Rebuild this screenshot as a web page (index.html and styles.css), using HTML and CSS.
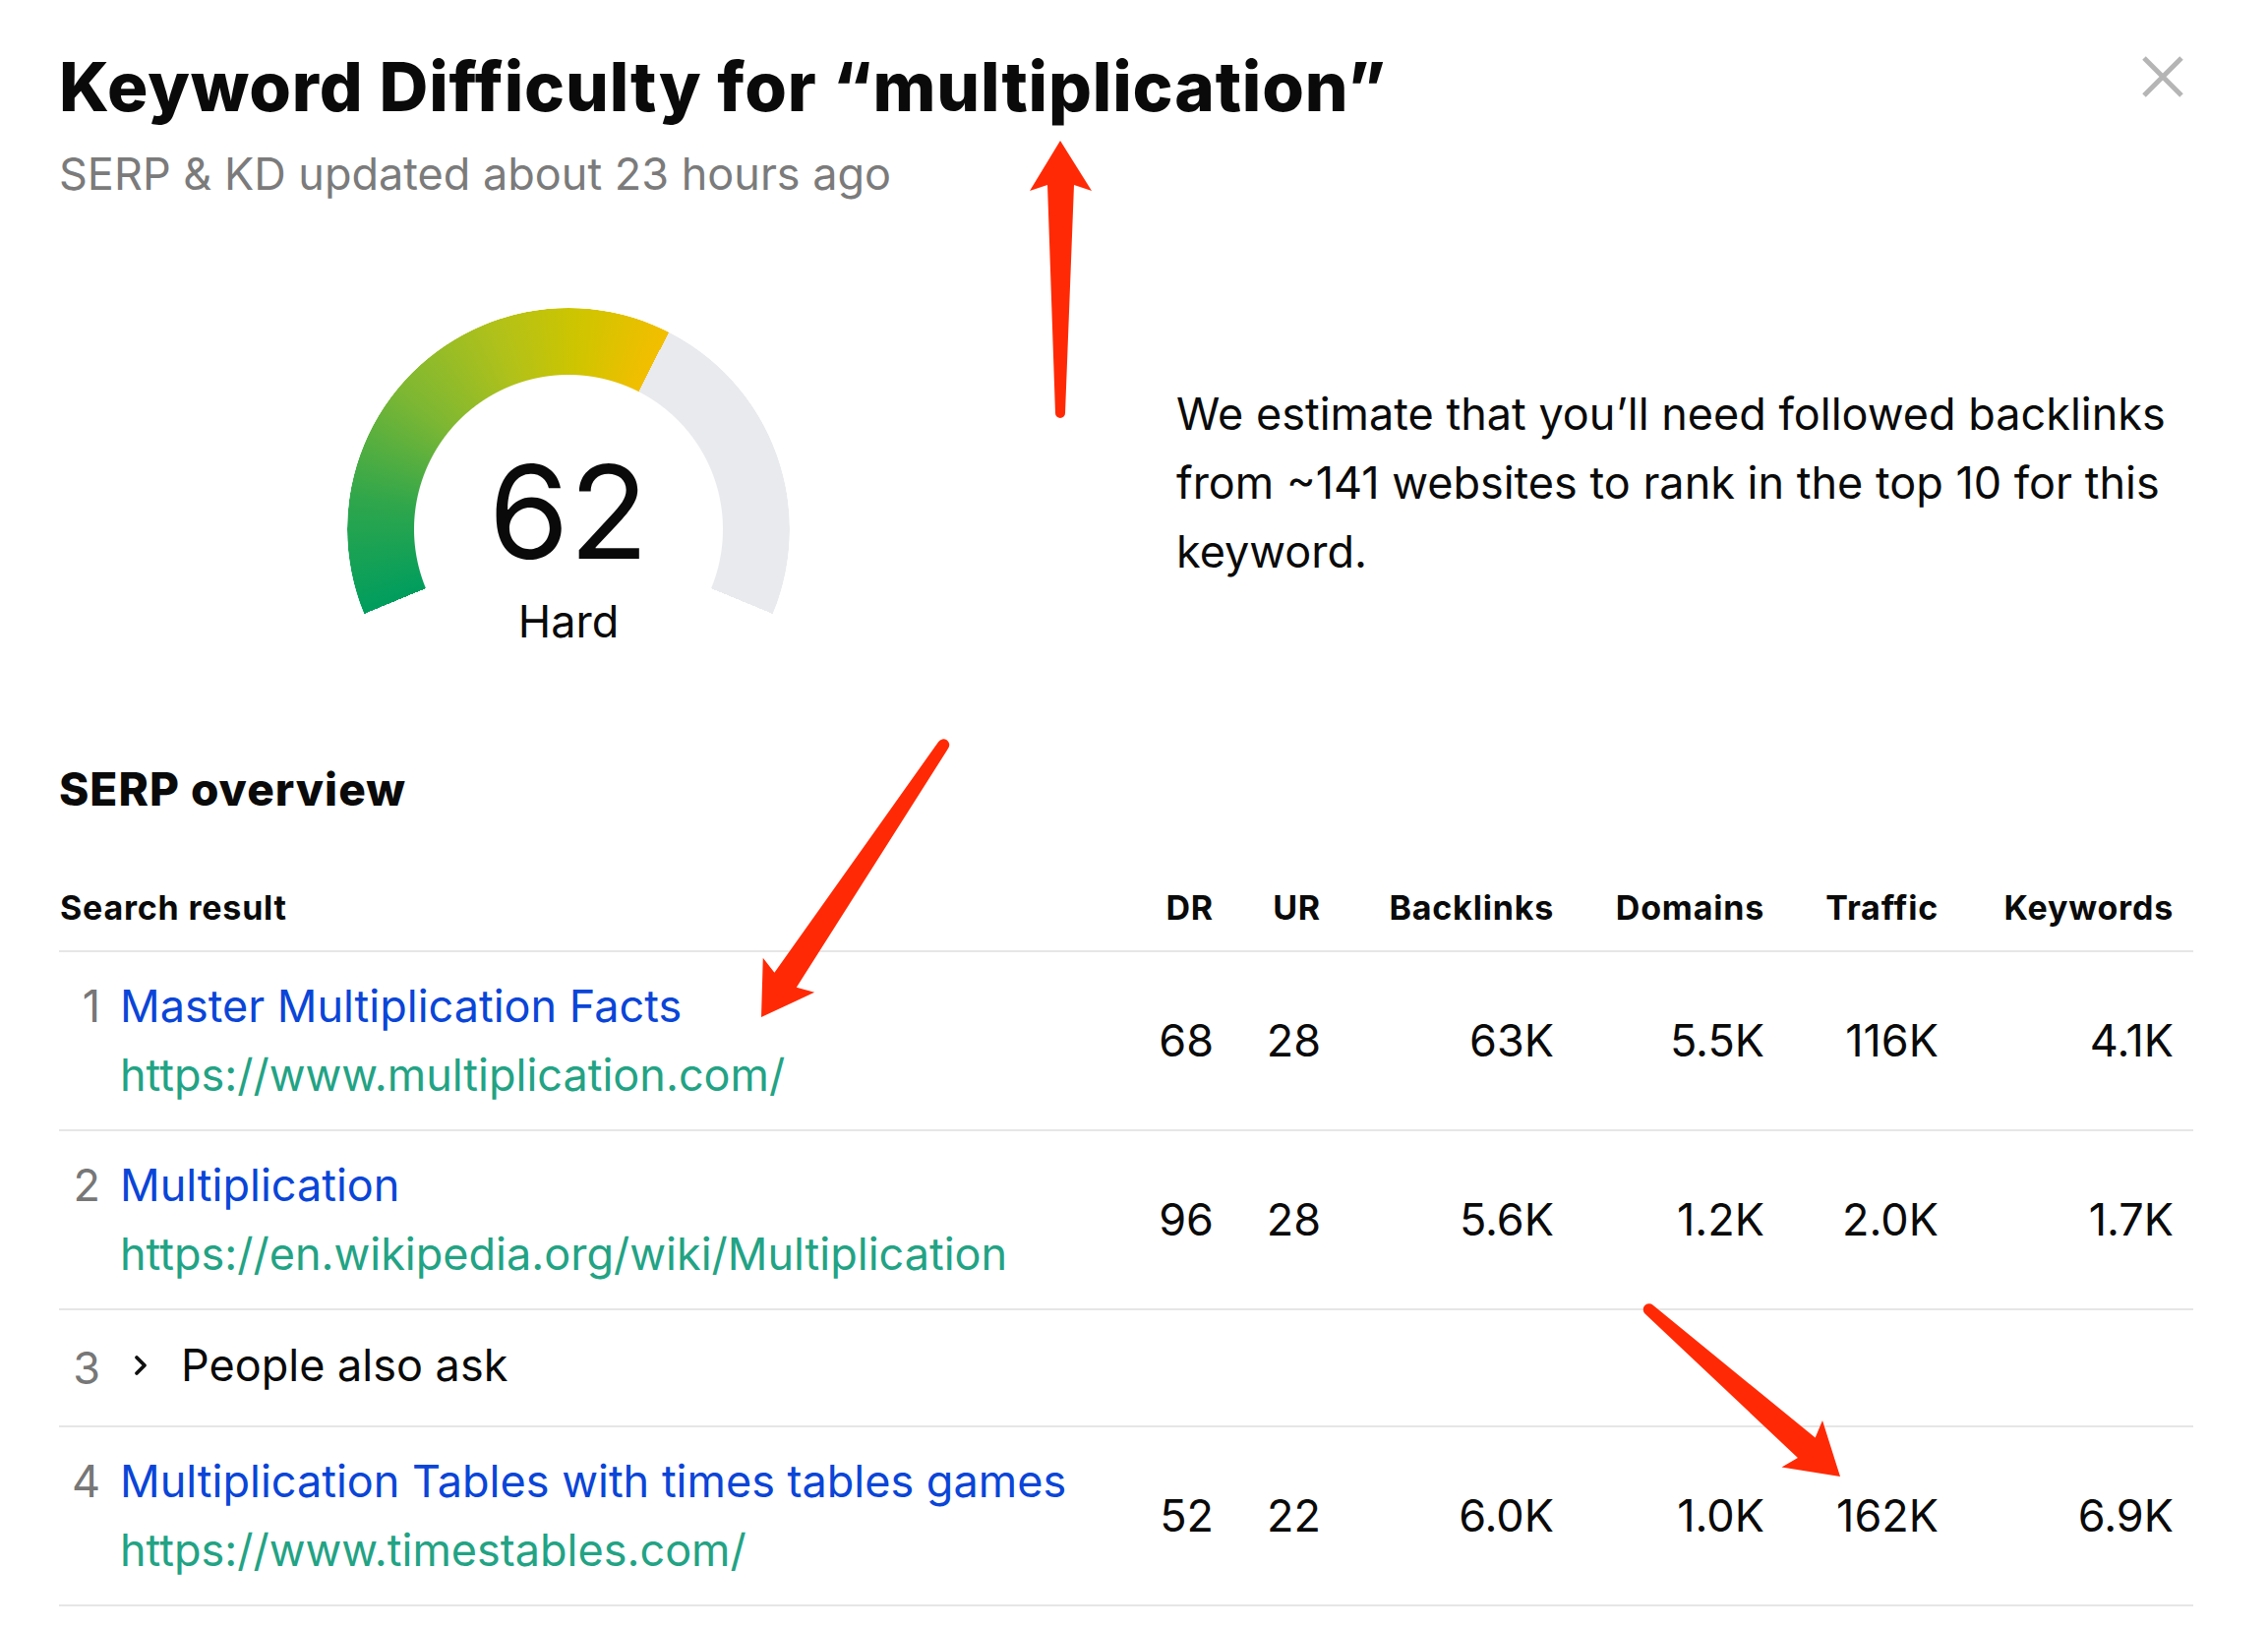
FILE: index.html
```html
<!DOCTYPE html>
<html lang="en">
<head>
<meta charset="utf-8">
<title>Keyword Difficulty for “multiplication”</title>
<link rel="stylesheet" href="styles.css">
</head>
<body>
<div class="page">
  <header class="head">
    <div class="head-text">
      <h1 class="title">Keyword Difficulty for “multiplication”</h1>
      <p class="updated">SERP &amp; KD updated about 23 hours ago</p>
    </div>
    <button class="close" aria-label="Close">
      <svg width="44" height="42" viewBox="0 0 44 42"><path d="M3 2 L41 40 M41 2 L3 40" stroke="#b5b5b5" stroke-width="5" fill="none"/></svg>
    </button>
  </header>

  <section class="kd">
    <div class="gauge-col">
      <div class="gauge">
        <span class="gauge-value">62</span>
        <span class="gauge-label">Hard</span>
      </div>
    </div>
    <p class="estimate">We estimate that you’ll need followed backlinks from ~141 websites to rank in the top 10 for this keyword.</p>
  </section>

  <h2 class="serp-title">SERP overview</h2>

  <div class="table">
    <div class="row head-row">
      <div class="cell-main">Search result</div>
      <div class="num">DR</div>
      <div class="num">UR</div>
      <div class="num">Backlinks</div>
      <div class="num">Domains</div>
      <div class="num">Traffic</div>
      <div class="num">Keywords</div>
    </div>

    <div class="row result">
      <div class="cell-main">
        <span class="rank">1</span>
        <div class="res-text">
          <a class="res-title">Master Multiplication Facts</a>
          <a class="res-url">https://www.multiplication.com/</a>
        </div>
      </div>
      <div class="num">68</div>
      <div class="num">28</div>
      <div class="num">63K</div>
      <div class="num">5.5K</div>
      <div class="num">116K</div>
      <div class="num">4.1K</div>
    </div>

    <div class="row result">
      <div class="cell-main">
        <span class="rank">2</span>
        <div class="res-text">
          <a class="res-title">Multiplication</a>
          <a class="res-url">https://en.wikipedia.org/wiki/Multiplication</a>
        </div>
      </div>
      <div class="num">96</div>
      <div class="num">28</div>
      <div class="num">5.6K</div>
      <div class="num">1.2K</div>
      <div class="num">2.0K</div>
      <div class="num">1.7K</div>
    </div>

    <div class="row result paa">
      <div class="cell-main">
        <span class="rank rank-paa">3</span>
        <svg class="chev" width="16" height="22" viewBox="0 0 16 22"><path d="M4 3 L12 11 L4 19" stroke="#111" stroke-width="3.8" fill="none" stroke-linecap="round" stroke-linejoin="round"/></svg>
        <span class="paa-text">People also ask</span>
      </div>
    </div>

    <div class="row result">
      <div class="cell-main">
        <span class="rank">4</span>
        <div class="res-text">
          <a class="res-title">Multiplication Tables with times tables games</a>
          <a class="res-url">https://www.timestables.com/</a>
        </div>
      </div>
      <div class="num">52</div>
      <div class="num">22</div>
      <div class="num">6.0K</div>
      <div class="num">1.0K</div>
      <div class="num">162K</div>
      <div class="num">6.9K</div>
    </div>
  </div>

  <svg class="arrows" width="2306" height="1656" viewBox="0 0 2306 1656" aria-hidden="true">
    <g fill="#ff2a05">
      <path transform="translate(1078 143)" d="M0 0 L32 51 L14 45 L5 277 A5 5 0 0 1 -5 277 L-13 45 L-31 51 Z"/>
      <path transform="translate(774 1034) rotate(213.8)" d="M0 0 L32 51 L14 45 L6 333 A6 6 0 0 1 -6 333 L-13 45 L-31 51 Z"/>
      <path transform="translate(1871 1501) rotate(131.15)" d="M0 0 L32 51 L14 45 L6 258 A6 6 0 0 1 -6 258 L-13 45 L-31 51 Z"/>
    </g>
  </svg>
</div>
</body>
</html>
```

FILE: styles.css
```css
* { box-sizing: border-box; }
html, body { margin: 0; padding: 0; background: #fff; }
body {
  font-family: Inter, "Noto Sans", sans-serif;
  color: #111;
  width: 2306px;
  height: 1656px;
  overflow: hidden;
}
.page {
  position: relative;
  height: 1656px;
  padding: 0 76px 0 60px;
}

/* Header */
.head {
  display: flex;
  justify-content: space-between;
  align-items: flex-start;
}
.title {
  margin: 0;
  padding-top: 48px;
  font-size: 69px;
  line-height: 80px;
  font-weight: 800;
  letter-spacing: 0.85px;
  color: #0a0a0a;
}
.updated {
  margin: 21px 0 0;
  font-size: 45px;
  line-height: 56px;
  color: #7b7b7b;
}
.close {
  margin: 57px 9px 0 0;
  padding: 0;
  border: 0;
  background: none;
  width: 44px;
  height: 42px;
  display: block;
}
.close svg { display: block; }

/* KD section */
.kd {
  display: grid;
  grid-template-columns: 1036px 1fr;
  column-gap: 100px;
  margin-top: 108px;
}
.gauge-col {
  display: flex;
  justify-content: center;
}
.gauge {
  position: relative;
  width: 450px;
  height: 360px;
  display: flex;
  flex-direction: column;
  align-items: center;
  padding-top: 141px;
}
.gauge::before {
  content: "";
  position: absolute;
  left: 0;
  top: 0;
  width: 450px;
  height: 450px;
  border-radius: 50%;
  background: conic-gradient(from 247.5deg,
    #009d5e 0deg,
    #2ea64c 30deg,
    #7db733 62deg,
    #b0c11a 92deg,
    #cec500 115deg,
    #f3be00 139.5deg,
    #e9eaed 139.5deg 225deg,
    transparent 225deg);
  -webkit-mask: radial-gradient(circle closest-side, transparent 156.5px, #000 157.5px, #000 224.5px, transparent 225.5px);
  mask: radial-gradient(circle closest-side, transparent 156.5px, #000 157.5px, #000 224.5px, transparent 225.5px);
}
.gauge-value {
  position: relative;
  font-size: 132px;
  line-height: 132px;
  font-weight: 400;
  color: #0a0a0a;
}
.gauge-label {
  position: relative;
  margin-top: 18px;
  font-size: 45px;
  line-height: 56px;
  color: #0a0a0a;
}
.estimate {
  margin: 73px 0 0;
  font-size: 45px;
  line-height: 70px;
  color: #0a0a0a;
}

/* SERP overview */
.serp-title {
  margin: 101px 0 0;
  font-size: 46px;
  line-height: 56px;
  font-weight: 800;
  letter-spacing: 1px;
  color: #0a0a0a;
}
.table { margin-top: 73px; }
.row {
  display: grid;
  grid-template-columns: 1fr 80px 109px 237px 214px 177px 239px;
  align-items: center;
  border-bottom: 2px solid #e6e6e6;
}
.num {
  text-align: right;
  padding-right: 20px;
}
.head-row {
  font-size: 34px;
  line-height: 40px;
  font-weight: 700;
  letter-spacing: 0.8px;
  padding-bottom: 23px;
  color: #0a0a0a;
}
.head-row .cell-main { padding-left: 1px; }
.result {
  font-size: 45px;
  line-height: 70px;
  padding: 20px 0 20px;
  color: #0a0a0a;
}
.cell-main {
  display: flex;
  align-items: flex-start;
}
.rank {
  flex: none;
  width: 42px;
  margin-right: 20px;
  text-align: right;
  color: #777;
}
.res-text {
  display: flex;
  flex-direction: column;
}
.res-title { color: #0a45d8; text-decoration: none; }
.res-url { color: #22a384; text-decoration: none; }
.paa { padding: 21px 0 26px; }
.paa .cell-main { align-items: center; }
.chev {
  flex: none;
  margin: 0 33px 0 13px;
}
.rank-paa { position: relative; top: 3px; }

/* Annotation overlay */
.arrows {
  position: absolute;
  left: 0;
  top: 0;
  pointer-events: none;
}
```
